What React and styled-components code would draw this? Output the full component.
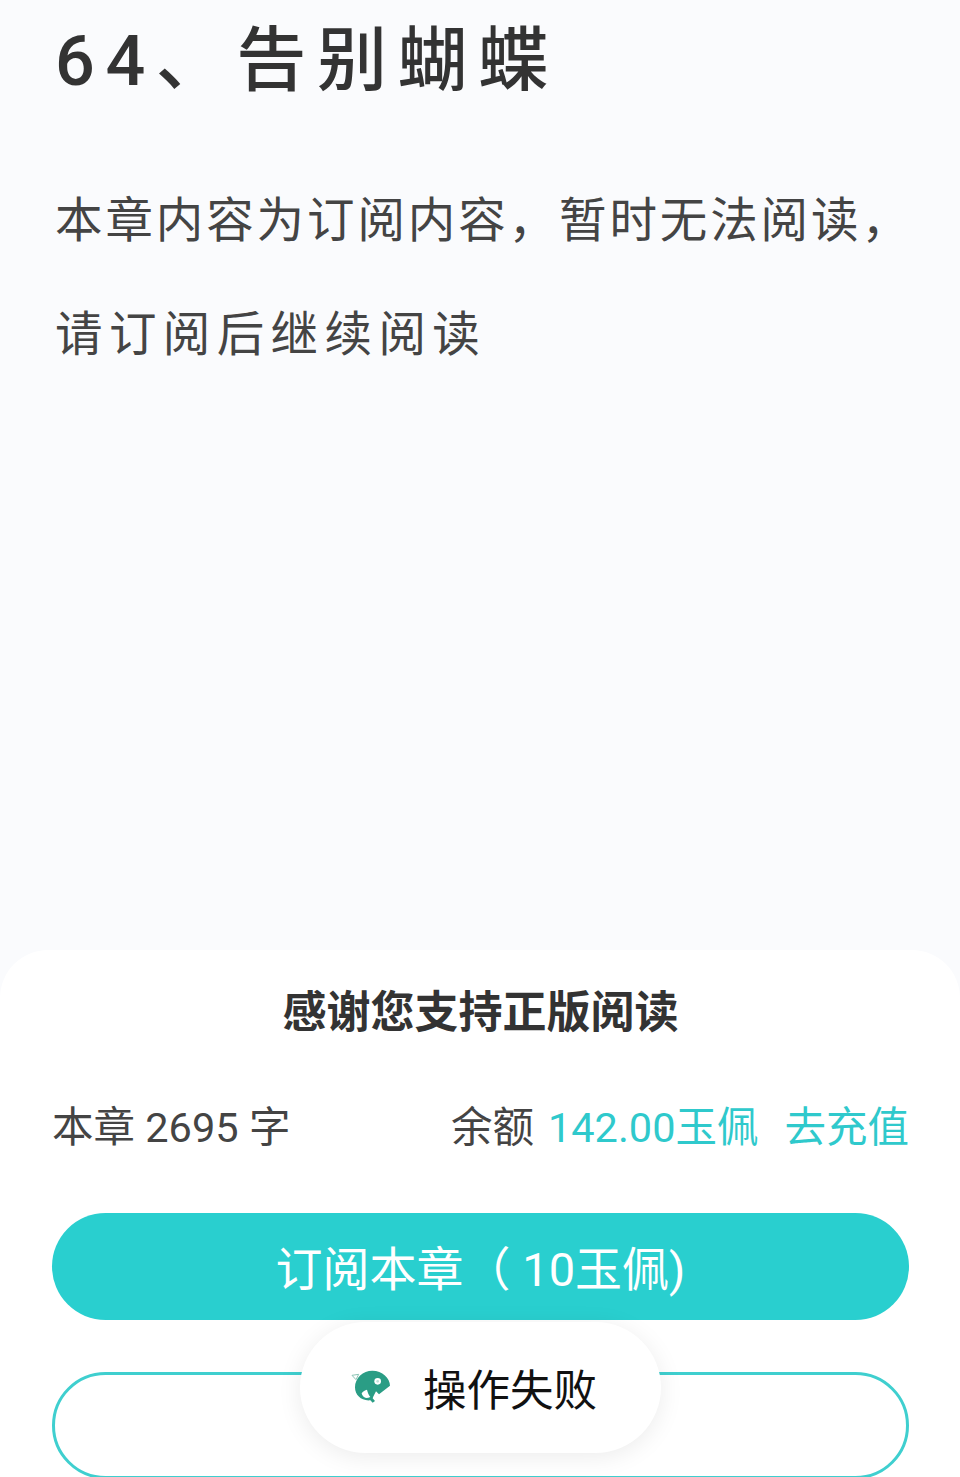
import React from 'react';
import styled, { createGlobalStyle } from 'styled-components';

const Global = createGlobalStyle`
  html, body { margin: 0; padding: 0; }
  body {
    background: #fafbfd;
    font-family: Roboto, "Noto Sans CJK SC", sans-serif;
  }
`;

const Page = styled.div`
  width: 960px;
  height: 1477px;
  display: flex;
  flex-direction: column;
  overflow: hidden;
  position: relative;
`;

const Article = styled.div`
  flex: 1;
  padding: 19px 0 0 55px;
`;

const Title = styled.h1`
  margin: 0 0 61px;
  font-size: 70px;
  line-height: 84px;
  font-weight: 500;
  letter-spacing: 10.6px;
  color: #333;
  white-space: nowrap;
`;

const Line = styled.p`
  margin: 0;
  font-size: 47.5px;
  line-height: 114px;
  letter-spacing: ${p => p.$spacing}px;
  color: #444;
  white-space: nowrap;
`;

const Sheet = styled.div`
  height: 527px;
  background: #fff;
  border-radius: 48px 48px 0 0;
  padding: 35px 51px 0 52px;
  box-sizing: border-box;
`;

const SheetTitle = styled.div`
  text-align: center;
  font-size: 44px;
  line-height: 56px;
  font-weight: 700;
  color: #333;
`;

const InfoRow = styled.div`
  display: flex;
  justify-content: space-between;
  margin-top: 59px;
  font-size: 41.5px;
  line-height: 56px;
  color: #444;
`;

const Accent = styled.span`
  color: #2fc9cc;
  margin-left: ${p => p.$gap || 0}px;
`;

const Button = styled.div`
  height: 107px;
  border-radius: 54px;
  box-sizing: border-box;
  display: flex;
  align-items: center;
  justify-content: center;
  padding-bottom: 3px;
  font-size: 47px;
  color: #fff;
  background: ${p => (p.$outline ? 'transparent' : '#29cfcf')};
  border: ${p => (p.$outline ? '3px solid #3fcfcf' : 'none')};
  margin-top: ${p => p.$top}px;
`;

const Toast = styled.div`
  position: absolute;
  left: 300px;
  top: 1322px;
  width: 361px;
  height: 131px;
  border-radius: 66px;
  background: #fff;
  box-shadow: 0 4px 24px rgba(0, 0, 0, 0.08);
  display: flex;
  align-items: center;
  padding-left: 50px;
  box-sizing: border-box;
  gap: 31px;
  font-size: 43.5px;
  color: #111;
`;

const Logo = () => (
  <svg width="42" height="37" viewBox="25 25 126 111">
    <path
      d="M92 30c30 0 53 22 53 45l-33 26-9-9c-4 8-8 15-10 21l7 8-7 5-7-7C60 122 40 104 40 80c0-28 24-50 52-50z"
      fill="#2a9d85"
    />
    <path d="M60 98c4-6 10-10 16-11 2 9 5 15 10 22-8 4-14 4-18 1-4-3-7-7-8-12z" fill="#fff" />
    <path d="M31 44l20-3-8 16z" fill="#fff" stroke="#8cc4b5" strokeWidth="3" />
    <circle cx="108" cy="62" r="10" fill="#fff" />
    <circle cx="108" cy="62" r="4" fill="#bfe3da" />
  </svg>
);

export default function App() {
  return (
    <Page>
      <Global />
      <Article>
        <Title>64、告别蝴蝶</Title>
        <Line $spacing={2.9}>本章内容为订阅内容，暂时无法阅读，</Line>
        <Line $spacing={6.4}>请订阅后继续阅读</Line>
      </Article>
      <Sheet>
        <SheetTitle>感谢您支持正版阅读</SheetTitle>
        <InfoRow>
          <span>本章 2695 字</span>
          <span>
            余额<Accent $gap={14}>142.00玉佩</Accent>
            <Accent $gap={26}>去充值</Accent>
          </span>
        </InfoRow>
        <Button $top={57}>订阅本章（ 10玉佩)</Button>
        <Button $outline $top={52} />
      </Sheet>
      <Toast>
        <Logo />
        操作失败
      </Toast>
    </Page>
  );
}
